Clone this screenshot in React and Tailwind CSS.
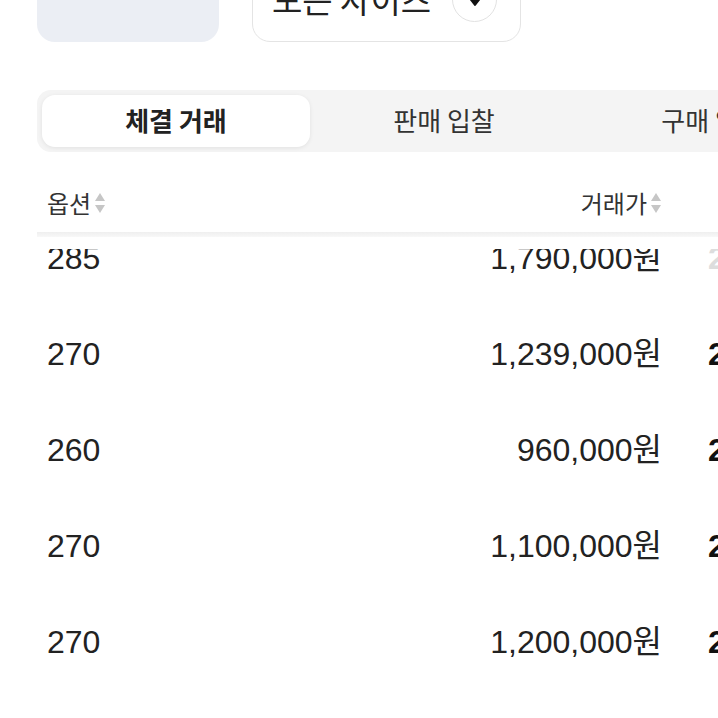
import React from "react";

const rows = [
  { size: "285", price: "1,790,000원", date: "24/12/18" },
  { size: "270", price: "1,239,000원", date: "24/12/17" },
  { size: "260", price: "960,000원", date: "24/12/16" },
  { size: "270", price: "1,100,000원", date: "24/12/16" },
  { size: "270", price: "1,200,000원", date: "24/12/15" },
  { size: "265", price: "1,150,000원", date: "24/12/14" },
];

const kr = { fontFamily: '"Noto Sans CJK KR", "Noto Sans", sans-serif' };
const num = { fontFamily: '"Liberation Sans", Arial, "Noto Sans CJK KR", sans-serif' };

function SortIcon() {
  return (
    <svg width="12" height="22" viewBox="0 0 12 22" className="ml-[3px] shrink-0">
      <path d="M6 1 L11 9 L1 9 Z" fill="#c6c6c6" />
      <path d="M6 21 L11 13 L1 13 Z" fill="#c6c6c6" />
    </svg>
  );
}

export default function App() {
  return (
    <div className="w-[718px] h-[718px] overflow-hidden bg-white text-[#222]" style={kr}>
      {/* top: product thumb + size select */}
      <div className="flex items-center gap-[33px] px-[37px] -mt-[44px]">
        <div className="w-[182px] h-[86px] shrink-0 rounded-[18px] bg-[#ebeef4]" />
        <div className="w-[269px] h-[86px] shrink-0 rounded-[18px] border border-[#e4e4e4] flex items-center justify-between pl-[19px] pr-[23px]">
          <span className="text-[33px] leading-none text-[#222] whitespace-nowrap">모든 사이즈</span>
          <span className="w-[45px] h-[45px] shrink-0 rounded-full border border-[#e2e2e2] flex items-center justify-center">
            <svg width="16" height="12" viewBox="0 0 16 12" className="mt-[4px]">
              <path d="M1.5 1.5 L14.5 1.5 L8 10 Z" fill="#111" stroke="#111" strokeWidth="2" strokeLinejoin="round" />
            </svg>
          </span>
        </div>
      </div>

      {/* tabs */}
      <div className="ml-[37px] mt-[48px] w-[814px] h-[62px] rounded-[14px] bg-[#f4f4f4] p-[5px] flex">
        <div className="w-[268px] h-[52px] shrink-0 rounded-[13px] bg-white shadow-[0_1px_4px_rgba(0,0,0,0.08)] flex items-center justify-center pb-[4px] text-[26px] font-bold text-[#222] whitespace-nowrap">
          체결 거래
        </div>
        <div className="w-[268px] h-[52px] shrink-0 flex items-center justify-center pb-[4px] text-[26px] text-[#333] whitespace-nowrap">
          판매 입찰
        </div>
        <div className="w-[268px] h-[52px] shrink-0 flex items-center justify-center pb-[4px] text-[26px] text-[#333] whitespace-nowrap">
          구매 입찰
        </div>
      </div>

      {/* table header */}
      <div className="h-[80px] flex items-end pb-[14px] pl-[37px] text-[24px] text-[#333]">
        <div className="w-[315px] shrink-0 pl-[10px] flex items-center leading-[30px]">
          옵션
          <SortIcon />
        </div>
        <div className="w-[310px] shrink-0 flex items-center justify-end leading-[30px]">
          거래가
          <SortIcon />
        </div>
        <div className="shrink-0 pl-[70px] flex items-center leading-[30px] whitespace-nowrap">
          거래일
          <SortIcon />
        </div>
      </div>
      <div className="ml-[37px] h-[5px] bg-gradient-to-b from-[#efefef] to-[#f8f8f8]" />
      <div className="h-[12px]" />

      {/* rows (scrolled) */}
      <div className="h-[469px] overflow-hidden">
        <div className="-mt-[39px] pl-[37px]" style={num}>
          {rows.map((r, i) => (
            <div key={i} className="h-[96px] flex items-center text-[32px] text-[#222] whitespace-nowrap">
              <span className="w-[315px] shrink-0 pl-[10px]">{r.size}</span>
              <span className="w-[310px] shrink-0 text-right">{r.price}</span>
              <span className={"shrink-0 pl-[46px] font-bold " + (i === 0 ? "text-[#ddd]" : "text-[#111]")}>{r.date}</span>
            </div>
          ))}
        </div>
      </div>
    </div>
  );
}
